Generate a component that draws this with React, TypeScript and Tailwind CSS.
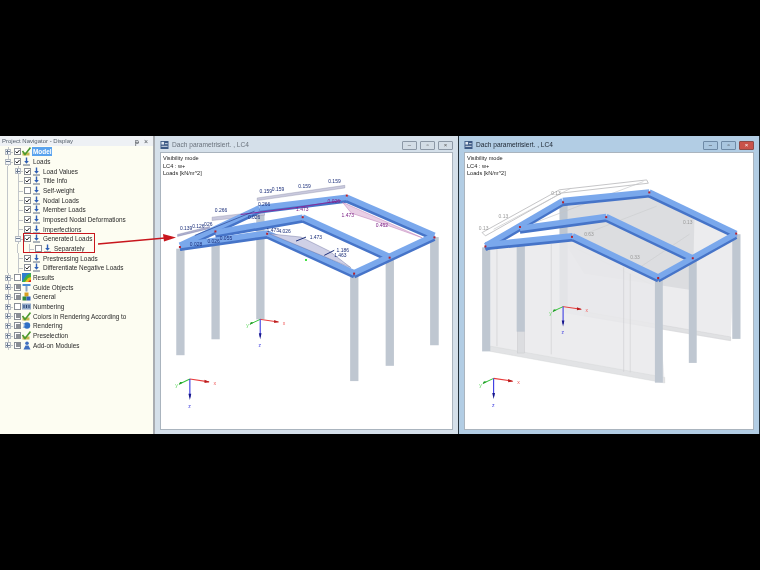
import React from 'react';

type Check = 'on' | 'off' | 'mixed';
type IconName = 'load' | 'model' | 'results' | 'guide' | 'general' | 'numbering' | 'rendering' | 'addon';

interface TreeRow {
    label: string;
    level: number;
    expander?: 'plus' | 'minus';
    check: Check;
    icon: IconName;
}

const rows: TreeRow[] = [
    { label: 'Model', level: 0, expander: 'plus', check: 'on', icon: 'model' },
    { label: 'Loads', level: 0, expander: 'minus', check: 'on', icon: 'load' },
    { label: 'Load Values', level: 1, expander: 'plus', check: 'on', icon: 'load' },
    { label: 'Title Info', level: 1, check: 'on', icon: 'load' },
    { label: 'Self-weight', level: 1, check: 'off', icon: 'load' },
    { label: 'Nodal Loads', level: 1, check: 'on', icon: 'load' },
    { label: 'Member Loads', level: 1, check: 'on', icon: 'load' },
    { label: 'Imposed Nodal Deformations', level: 1, check: 'on', icon: 'load' },
    { label: 'Imperfections', level: 1, check: 'on', icon: 'load' },
    { label: 'Generated Loads', level: 1, expander: 'minus', check: 'on', icon: 'load' },
    { label: 'Separately', level: 2, check: 'off', icon: 'load' },
    { label: 'Prestressing Loads', level: 1, check: 'on', icon: 'load' },
    { label: 'Differentiate Negative Loads', level: 1, check: 'on', icon: 'load' },
    { label: 'Results', level: 0, expander: 'plus', check: 'off', icon: 'results' },
    { label: 'Guide Objects', level: 0, expander: 'plus', check: 'mixed', icon: 'guide' },
    { label: 'General', level: 0, expander: 'plus', check: 'mixed', icon: 'general' },
    { label: 'Numbering', level: 0, expander: 'plus', check: 'off', icon: 'numbering' },
    { label: 'Colors in Rendering According to', level: 0, expander: 'plus', check: 'mixed', icon: 'model' },
    { label: 'Rendering', level: 0, expander: 'plus', check: 'mixed', icon: 'rendering' },
    { label: 'Preselection', level: 0, expander: 'plus', check: 'mixed', icon: 'model' },
    { label: 'Add-on Modules', level: 0, expander: 'plus', check: 'mixed', icon: 'addon' },
];

const TreeIcon = ({ name }: { name: IconName }) => {
    switch (name) {
        case 'load':
            return (
                <svg viewBox="0 0 9 9" className="w-[9px] h-[9px]">
                    <path d="M4.5 0.5V5.5" stroke="#2f5fb5" strokeWidth="1.4" />
                    <path d="M2.2 4L4.5 6.8 6.8 4Z" fill="#2f5fb5" />
                    <path d="M1 8H8" stroke="#5a6a80" strokeWidth="1" />
                </svg>
            );
        case 'model':
            return (
                <svg viewBox="0 0 9 9" className="w-[9px] h-[9px]">
                    <rect x="0.5" y="5.5" width="7" height="3" fill="#c8b850" />
                    <path d="M0.5 4L3 7.5 8.5 0.5" stroke="#4a9a30" strokeWidth="1.6" fill="none" />
                </svg>
            );
        case 'results':
            return (
                <svg viewBox="0 0 9 9" className="w-[9px] h-[9px]">
                    <rect width="9" height="9" fill="#2d7fd0" />
                    <path d="M0 9L5 2 9 0V5L5 9Z" fill="#40b040" />
                    <path d="M3 9L6 5 9 4V9Z" fill="#e8c020" />
                    <path d="M6 9L8 7 9 7V9Z" fill="#d83020" />
                </svg>
            );
        case 'guide':
            return (
                <svg viewBox="0 0 9 9" className="w-[9px] h-[9px]">
                    <rect x="0.5" y="1" width="8" height="2" fill="#4a8fd8" />
                    <rect x="3.5" y="3" width="2" height="5.5" fill="#8aa4c4" />
                </svg>
            );
        case 'general':
            return (
                <svg viewBox="0 0 9 9" className="w-[9px] h-[9px]">
                    <rect x="2.5" y="0.5" width="4" height="4" fill="#d8a020" />
                    <rect x="0.5" y="4.5" width="4" height="4" fill="#2f8a3a" />
                    <rect x="4.5" y="4.5" width="4" height="4" fill="#2f5fb5" />
                </svg>
            );
        case 'numbering':
            return (
                <svg viewBox="0 0 9 9" className="w-[9px] h-[9px]">
                    <rect y="1.5" width="9" height="6" fill="#8fa8c8" />
                    <path d="M2 3V6M4.5 3V6M7 3V6" stroke="#24406e" strokeWidth="1" />
                </svg>
            );
        case 'rendering':
            return (
                <svg viewBox="0 0 9 9" className="w-[9px] h-[9px]">
                    <circle cx="5" cy="4.5" r="3.2" fill="#2f6fc5" />
                    <path d="M0.5 2L3 4 1 7" stroke="#8fb0dc" strokeWidth="1" fill="none" />
                </svg>
            );
        case 'addon':
            return (
                <svg viewBox="0 0 9 9" className="w-[9px] h-[9px]">
                    <circle cx="5" cy="2.2" r="1.8" fill="#3f6fc0" />
                    <path d="M1.5 8.5L3.5 4.5H6.5L8.5 8.5Z" fill="#3f6fc0" />
                </svg>
            );
    }
};

const CheckBox = ({ state }: { state: Check }) => (
    <span className="w-[7px] h-[7px] shrink-0 border border-[#8a8f96] bg-white flex items-center justify-center">
        {state === 'on' && (
            <svg viewBox="0 0 5 5" className="w-[5px] h-[5px]">
                <path d="M0.5 2.5L2 4 4.5 1" stroke="#222" strokeWidth="1" fill="none" />
            </svg>
        )}
        {state === 'mixed' && <span className="w-[4px] h-[4px] bg-[#8c9096]" />}
    </span>
);

const Expander = ({ kind }: { kind: 'plus' | 'minus' }) => (
    <span className="w-[6px] h-[6px] border border-[#b4bac2] bg-[#f4f6f8] flex items-center justify-center relative">
        <span className="w-[4px] h-px bg-[#6a7a90]" />
        {kind === 'plus' && <span className="absolute w-px h-[4px] bg-[#6a7a90]" />}
    </span>
);

const Guide = ({ width }: { width: string }) => (
    <span className={`${width} h-full flex justify-center shrink-0`}>
        <span className="h-full border-l border-solid border-[#c2c6ca]" />
    </span>
);

const Row = ({ row }: { row: TreeRow }) => (
    <div className="flex items-center h-[9.68px] pl-px">
        {row.level >= 1 && <Guide width="w-[10px]" />}
        {row.level >= 2 && <Guide width="w-[11px]" />}
        <span className="w-[11px] h-full flex items-center justify-center shrink-0 relative">
            <span className="absolute left-1/2 top-0 bottom-0 border-l border-solid border-[#c2c6ca]" />
            <span className="absolute left-1/2 right-0 top-1/2 border-t border-solid border-[#c2c6ca]" />
            {row.expander && <Expander kind={row.expander} />}
        </span>
        <span className="ml-[1px] shrink-0 flex">
            <CheckBox state={row.check} />
        </span>
        <span className="ml-[1px] shrink-0 flex">
            <TreeIcon name={row.icon} />
        </span>
        <span
            className={`ml-[1px] px-px text-[6.4px] leading-[9px] whitespace-nowrap ${
                row.label === 'Model' ? 'bg-[#5aa3ee] text-white font-bold' : 'text-[#2a2a2a]'
            }`}
        >
            {row.label}
        </span>
    </div>
);

const Navigator = () => (
    <div className="w-[155px] h-full flex flex-col bg-[#fdfdf2] border-r-2 border-[#a9adb2]">
        <div className="h-[10px] bg-[#eef1f5] flex items-center pl-[2px] pr-[5px] text-[6px] text-[#55606c] justify-between">
            <span>Project Navigator - Display</span>
            <span className="flex gap-[5px] text-[#4a4f55] text-[7px] leading-none">
                <span>ᵽ</span>
                <span>×</span>
            </span>
        </div>
        <div className="pl-[1px] pt-[1px] relative">
            {rows.map((r) => (
                <Row key={r.label} row={r} />
            ))}
            {/* highlight round the row under discussion */}
            <div className="absolute left-[23px] top-[87px] w-[72px] h-[20px] border border-[#c8161d]" />
        </div>
    </div>
);

const WinIcon = () => (
    <svg viewBox="0 0 9 9" className="w-[9px] h-[8px] shrink-0">
        <rect width="9" height="9" fill="#3d5a85" />
        <rect x="1" y="1" width="3" height="3" fill="#dfe8f2" />
        <path d="M1 6H8M5 3H8" stroke="#dfe8f2" strokeWidth="1" />
    </svg>
);

const WinButton = ({ glyph, close, active }: { glyph: string; close?: boolean; active: boolean }) => (
    <span
        className={`w-[15px] h-[9px] flex items-center justify-center border rounded-[1px] text-[6px] leading-none ${
            close && active
                ? 'bg-[#c9524a] border-[#8e4a48] text-white'
                : active
                ? 'bg-[#a9c6df] border-[#6e8aa6] text-[#333]'
                : 'bg-[#d3dde6] border-[#8c98a6] text-[#555]'
        }`}
    >
        {glyph}
    </span>
);

const WindowFrame = ({
    title,
    active,
    lines,
    children,
    viewBox,
}: {
    title: string;
    active: boolean;
    lines: string[];
    children: React.ReactNode;
    viewBox: string;
}) => (
    <div
        className={`h-full flex flex-col px-[5px] pb-[4px] border-r border-[#23303a] ${
            active ? 'w-[301px] bg-[#b2cde4]' : 'w-[304px] bg-[#d5e0ea]'
        }`}
    >
        <div className="h-[16px] flex items-center gap-[3px] shrink-0 pt-[2px]">
            <WinIcon />
            <span className={`text-[6.6px] whitespace-nowrap flex-1 ${active ? 'text-[#1c2530]' : 'text-[#6a727c]'}`}>
                {title}
            </span>
            <div className="flex gap-[3px]">
                <WinButton glyph="–" active={active} />
                <WinButton glyph="▫" active={active} />
                <WinButton glyph="×" close active={active} />
            </div>
        </div>
        <div className="flex-1 bg-white relative overflow-hidden border border-[#aab4be]">
            <svg viewBox={viewBox} className="absolute inset-0 w-full h-full">
                {children}
            </svg>
            <div className="relative pl-[2px] pt-[2px] text-[5.6px] leading-[7.6px] text-[#222]">
                {lines.map((l) => (
                    <div key={l}>{l}</div>
                ))}
            </div>
        </div>
    </div>
);

const Beam = ({ pts, side = 14, top = 17 }: { pts: [number, number, number, number]; side?: number; top?: number }) => {
    const [x1, y1, x2, y2] = pts;
    return (
        <g>
            <path d={`M${x1} ${y1 + side * 0.7}L${x2} ${y2 + side * 0.7}`} stroke="#4674c8" strokeWidth={side} />
            <path d={`M${x1} ${y1}L${x2} ${y2}`} stroke="#7aa8ec" strokeWidth={top} />
        </g>
    );
};

const Node = ({ x, y }: { x: number; y: number }) => <rect x={x - 3} y={y - 3} width="6" height="6" fill="#b8202a" />;

const Column = ({ x, w, y1, y2 }: { x: number; w: number; y1: number; y2: number }) => (
    <rect x={x} y={y1} width={w} height={y2 - y1} fill="#bfc7d1" />
);

const Axes = ({ x, y, s = 1 }: { x: number; y: number; s?: number }) => (
    <g transform={`translate(${x} ${y}) scale(${s})`}>
        <path d="M0 0L-30 14" stroke="#35c43a" strokeWidth="3" />
        <path d="M-20 10L-32 17 -28 8Z" fill="#1c9a22" />
        <path d="M0 0L55 8" stroke="#e83a3a" strokeWidth="3" />
        <path d="M42 2L57 8 42 11Z" fill="#b81c1c" />
        <path d="M0 0V52" stroke="#2a2ae0" strokeWidth="3" />
        <path d="M-4 42H4L0 60Z" fill="#15158a" />
        <text x="68" y="17" fontSize="15" fill="#f05a5a">x</text>
        <text x="-42" y="24" fontSize="15" fill="#60d860">y</text>
        <text x="-5" y="84" fontSize="15" fill="#4040e0">z</text>
    </g>
);

const LoadText = ({ x, y, t, c = '#1b2f7a' }: { x: number; y: number; t: string; c?: string }) => (
    <text x={x} y={y} fontSize="15" fill={c}>{t}</text>
);

const LeftModel = () => (
    <g fontFamily="'Liberation Sans', sans-serif">
        <Column x={64} w={25} y1={345} y2={666} />
        <Column x={170} w={25} y1={325} y2={618} />
        <Column x={305} w={25} y1={240} y2={558} />
        <Column x={588} w={25} y1={425} y2={744} />
        <Column x={695} w={25} y1={378} y2={698} />
        <Column x={829} w={26} y1={310} y2={636} />

        {/* far-side load bands */}
        <path d="M68 302L165 278 165 284 68 308Z" fill="#aeb0cf" stroke="#6c6f9a" />
        <path d="M172 250L330 232 330 244 172 260Z" fill="#c9c9dd" stroke="#80829f" />
        <path d="M308 192L572 154 572 162 308 200Z" fill="#c9c9dd" stroke="#7c7f9c" />

        <Beam pts={[75, 335, 315, 222]} />
        <Beam pts={[315, 222, 578, 190]} />
        <Beam pts={[182, 296, 445, 250]} />
        <Beam pts={[445, 250, 705, 368]} />
        <Beam pts={[578, 190, 842, 305]} />
        <Beam pts={[75, 335, 338, 298]} />
        <Beam pts={[338, 298, 600, 418]} />
        <Beam pts={[600, 418, 842, 305]} />

        {/* loads on the members */}
        <path d="M565 205L625 232 805 312 665 262 592 238Z" fill="#e9cfe6" stroke="#a34a9a" />
        <path d="M345 300L440 310 525 352 590 402Z" fill="#cfd0e6" stroke="#4a4f88" />
        <path d="M258 242L420 222 560 200" stroke="#8a2a9a" strokeWidth="3" fill="none" />
        <path d="M120 305L300 232" stroke="#24408e" strokeWidth="2" fill="none" />
        <path d="M425 322L455 310M510 365L540 350" stroke="#1b2f7a" strokeWidth="3" />

        <LoadText x={75} y={288} t="0.139" />
        <LoadText x={112} y={282} t="0.126" />
        <LoadText x={148} y={277} t="026" />
        <LoadText x={180} y={233} t="0.266" />
        <LoadText x={315} y={178} t="0.159" />
        <LoadText x={352} y={170} t="0.159" />
        <LoadText x={432} y={162} t="0.159" />
        <LoadText x={522} y={148} t="0.159" />
        <LoadText x={310} y={215} t="0.266" />
        <LoadText x={105} y={337} t="0.028" />
        <LoadText x={158} y={327} t="0.026" />
        <LoadText x={195} y={320} t="0.055" />
        <LoadText x={280} y={257} t="0.026" />
        <LoadText x={336} y={295} t="1.473" />
        <LoadText x={372} y={298} t="4.026" />
        <LoadText x={466} y={316} t="1.473" />
        <LoadText x={547} y={356} t="1.186" />
        <LoadText x={540} y={370} t="1.463" />
        <LoadText x={562} y={251} t="1.473" c="#7c1f86" />
        <LoadText x={665} y={280} t="0.462" c="#7c1f86" />
        <LoadText x={425} y={230} t="1.473" c="#7c1f86" />
        <LoadText x={520} y={208} t="0.026" c="#7c1f86" />

        <Node x={75} y={340} />
        <Node x={182} y={293} />
        <Node x={338} y={300} />
        <Node x={445} y={250} />
        <Node x={578} y={185} />
        <Node x={600} y={420} />
        <Node x={707} y={372} />
        <Node x={842} y={311} />
        <rect x="452" y="376" width="6" height="6" fill="#40e040" />

        <Axes x={317} y={558} s={1} />
        <Axes x={105} y={738} s={1.05} />
    </g>
);

const RightModel = () => (
    <g fontFamily="'Liberation Sans', sans-serif">
        {/* walls behind the frame */}
        <path d="M320 205L580 175 840 300 825 625 320 540Z" fill="#ececee" />
        <path d="M330 215L575 185 715 255 710 470 380 420 330 340Z" fill="#dcdde0" />
        <path d="M380 548L825 623 825 612 380 535Z" fill="#e0e1e3" stroke="#c8c9cc" />
        <path d="M338 335L610 465M380 300L600 215M520 420L700 300" stroke="#bcbdc0" fill="none" />

        <Column x={305} w={25} y1={210} y2={518} />
        <Column x={698} w={24} y1={370} y2={691} />
        <Column x={830} w={25} y1={300} y2={618} />

        {/* ghost roof */}
        <path d="M70 295L305 165 570 135 575 145 310 175 80 305Z" fill="#ffffff" stroke="#a6a7aa" strokeWidth="2" />
        <path d="M105 285L340 160M230 265L560 140" stroke="#c4c5c8" strokeWidth="2" fill="none" />

        <path d="M95 345L345 312 600 435 625 750 95 645Z" fill="#e9e9eb" fillOpacity="0.85" />
        <path d="M95 640L625 735 625 752 95 656Z" fill="#e2e3e5" stroke="#cfd0d2" />
        <path d="M115 345V640M280 330V665M500 400V718M520 420V720" stroke="#cfd0d3" strokeWidth="2" fill="none" />
        <rect x="177" y="596" width="22" height="65" fill="#dcdde0" stroke="#bfc0c3" />

        <Column x={70} w={25} y1={340} y2={656} />
        <Column x={175} w={25} y1={330} y2={596} />
        <Column x={595} w={24} y1={435} y2={751} />

        <Beam pts={[80, 335, 315, 198]} />
        <Beam pts={[315, 198, 578, 172]} />
        <Beam pts={[185, 282, 447, 246]} />
        <Beam pts={[447, 246, 710, 372]} />
        <Beam pts={[578, 172, 842, 298]} />
        <Beam pts={[80, 332, 345, 305]} />
        <Beam pts={[345, 305, 605, 430]} />
        <Beam pts={[605, 430, 842, 298]} />

        <Node x={80} y={337} />
        <Node x={185} y={278} />
        <Node x={316} y={203} />
        <Node x={343} y={308} />
        <Node x={447} y={248} />
        <Node x={578} y={173} />
        <Node x={605} y={433} />
        <Node x={710} y={373} />
        <Node x={842} y={298} />

        <text x="120" y="252" fontSize="15" fill="#9a9a9a">0.13</text>
        <text x="60" y="287" fontSize="15" fill="#9a9a9a">0.13</text>
        <text x="280" y="180" fontSize="15" fill="#9a9a9a">0.13</text>
        <text x="680" y="268" fontSize="15" fill="#9a9a9a">0.13</text>
        <text x="520" y="374" fontSize="15" fill="#9a9a9a">0.33</text>
        <text x="380" y="306" fontSize="15" fill="#9a9a9a">0.63</text>

        <Axes x={316} y={520} s={1} />
        <Axes x={105} y={738} s={1.05} />
    </g>
);

export default function App() {
    return (
        <div className="w-[760px] h-[570px] bg-black pt-[136px] relative font-['Liberation_Sans',sans-serif] blur-[0.35px]">
            <div className="h-[298px] flex">
                <Navigator />
                <WindowFrame
                    title="Dach parametrisiert. , LC4"
                    active={false}
                    viewBox="18 57 877 831"
                    lines={['Visibility mode', 'LC4 : w+', 'Loads [kN/m^2]']}
                >
                    <LeftModel />
                </WindowFrame>
                <WindowFrame
                    title="Dach parametrisiert. , LC4"
                    active
                    viewBox="18 57 875 831"
                    lines={['Visibility mode', 'LC4 : w+', 'Loads [kN/m^2]']}
                >
                    <RightModel />
                </WindowFrame>
            </div>
            {/* callout arrow crosses the navigator and the first window */}
            <svg viewBox="0 0 760 570" className="absolute inset-0 w-[760px] h-[570px] pointer-events-none">
                <path d="M98 244L165 238" stroke="#c8161d" strokeWidth="1.4" />
                <path d="M163 234L176 237.5 164 241.5Z" fill="#c8161d" />
            </svg>
        </div>
    );
}
